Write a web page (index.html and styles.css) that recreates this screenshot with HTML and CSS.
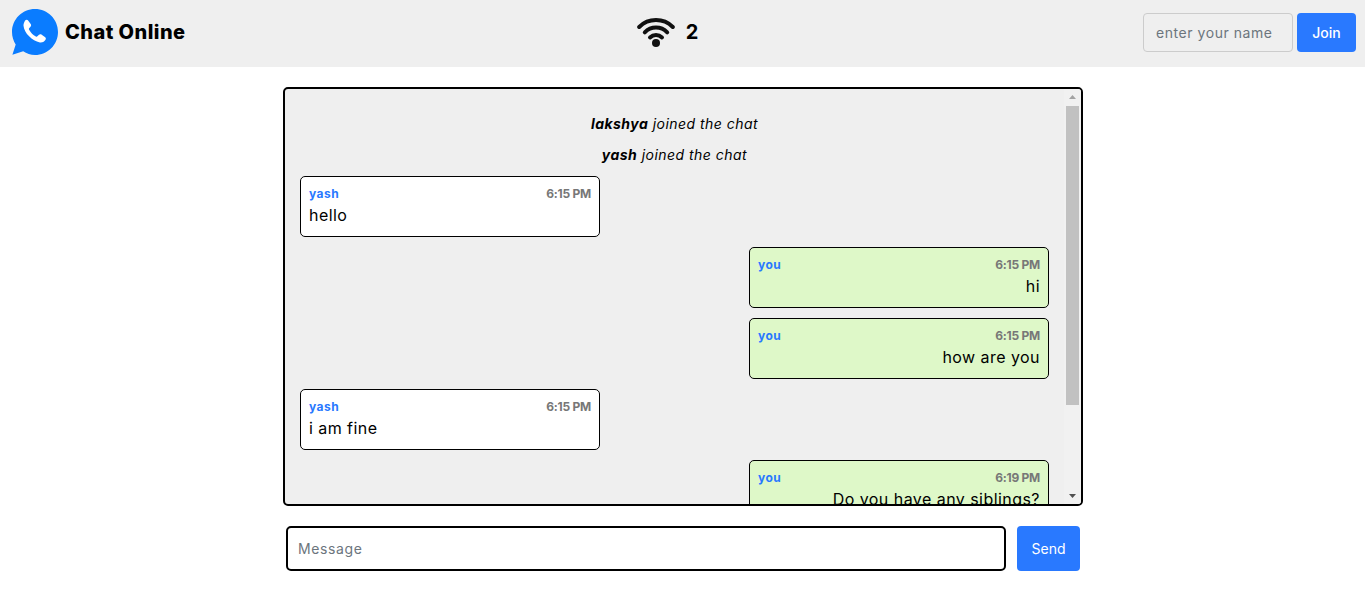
FILE: index.html
```html
<!DOCTYPE html>
<html lang="en">
<head>
<meta charset="utf-8">
<title>Chat Online</title>
<link rel="stylesheet" href="styles.css">
</head>
<body>
<header class="topbar">
  <div class="brand">
    <svg class="logo" viewBox="0 0 46 46" aria-hidden="true">
      <path fill="#0a7cff" d="M23 0C10.300 0 0 10.300 0 23c0 4.600 1.400 8.900 3.700 12.500L.4 45.700l10.800-3.400C14.600 44.700 18.700 46 23 46c12.700 0 23-10.300 23-23S35.700 0 23 0z"/>
      <g transform="translate(1.200 1.300) scale(.92)">
        <path fill="#fff" d="M12.700 11.300c1-1 2.700-1.300 3.500-.3l2.800 4c.7 1 .6 2-.2 2.900l-1.500 1.600c-.4.500-.4 1 0 1.700 1.800 3.200 4.200 5.600 7.300 7.300.7.400 1.200.3 1.700-.2l1.700-1.600c.9-.8 2-.8 3-.1l3.800 2.600c1 .8.900 2.300-.1 3.400-1.500 1.700-3.200 2.800-5.700 2.400-4.300-.7-8.400-3.300-11.700-6.700-3.400-3.400-5.700-7.600-6.100-11.600-.2-2.300 1-3.900 1.500-5z"/>
      </g>
    </svg>
    <h1 class="brand-name">Chat Online</h1>
  </div>
  <div class="status">
    <svg class="wifi" viewBox="0 0 38 30" aria-hidden="true">
      <g fill="none" stroke="#111" stroke-width="4" stroke-linecap="round">
        <path d="M2.200 10C11.500 .8 26.500 .8 35.800 10"/>
        <path d="M7.800 15.300C14 9 24 9 30.200 15.300"/>
        <path d="M13 20.500C16.500 17.200 21.500 17.200 25 20.500"/>
      </g>
      <circle cx="19" cy="26" r="4" fill="#111"/>
    </svg>
    <span class="status-count">2</span>
  </div>
  <form class="join">
    <input class="name-input" type="text" placeholder="enter your name">
    <button class="btn join-btn" type="button">Join</button>
  </form>
</header>
<main class="chat">
  <div class="frame">
    <section class="log">
      <p class="notice"><b>lakshya</b> joined the chat</p>
      <p class="notice"><b>yash</b> joined the chat</p>
      <article class="bubble">
        <div class="meta"><span class="who">yash</span><span class="time">6:15 PM</span></div>
        <div class="text">hello</div>
      </article>
      <article class="bubble mine">
        <div class="meta"><span class="who">you</span><span class="time">6:15 PM</span></div>
        <div class="text">hi</div>
      </article>
      <article class="bubble mine">
        <div class="meta"><span class="who">you</span><span class="time">6:15 PM</span></div>
        <div class="text">how are you</div>
      </article>
      <article class="bubble">
        <div class="meta"><span class="who">yash</span><span class="time">6:15 PM</span></div>
        <div class="text">i am fine</div>
      </article>
      <article class="bubble mine">
        <div class="meta"><span class="who">you</span><span class="time">6:19 PM</span></div>
        <div class="text">Do you have any siblings?</div>
      </article>
    </section>
    <div class="scrollbar" aria-hidden="true">
      <svg class="arrow" viewBox="0 0 17 17"><path fill="#a3a3a3" d="M8.500 6 12 10H5z"/></svg>
      <div class="track"><div class="thumb"></div></div>
      <svg class="arrow" viewBox="0 0 17 17"><path fill="#505050" d="M8.500 11 12 7H5z"/></svg>
    </div>
  </div>
  <form class="composer">
    <input class="message-input" type="text" placeholder="Message">
    <button class="btn send-btn" type="button">Send</button>
  </form>
</main>
</body>
</html>
```
FILE: styles.css
```css
* { box-sizing: border-box; }
html, body { margin: 0; padding: 0; }
body {
  height: 596px;
  overflow: hidden;
  background: #fff;
  color: #000;
  font-family: Inter, "Noto Sans", sans-serif;
}
.topbar {
  height: 67px;
  background: #efefef;
  display: grid;
  grid-template-columns: 1fr auto 1fr;
  align-items: center;
  padding: 0 9px 3px 12px;
}
.brand { display: flex; align-items: center; gap: 7px; }
.logo { width: 46px; height: 46px; display: block; }
.brand-name { margin: 0; font-size: 20px; font-weight: 800; letter-spacing: .45px; }
.status { display: flex; align-items: center; gap: 11px; margin-left: -33px; }
.wifi { width: 38px; height: 30px; display: block; }
.status-count { font-size: 20px; font-weight: 700; }
.join { display: flex; justify-content: flex-end; gap: 4px; }
.name-input {
  width: 150px; height: 39px; padding: 0 12px;
  border: 1px solid #ccc; border-radius: 4px;
  background: #efefef; font: 400 14px Inter, sans-serif; letter-spacing: .55px; color: #212529;
}
.name-input::placeholder, .message-input::placeholder { color: #6c757d; opacity: 1; }
.btn {
  border: 0; border-radius: 4px; background: #2979ff; color: #fff;
  font: 400 14px Inter, sans-serif; padding: 0;
}
.join-btn { width: 59px; height: 39px; font-weight: 500; }
.chat { width: 800px; margin: 20px 0 0 283px; }
.frame {
  height: 419px;
  border: 2px solid #000;
  border-radius: 5px;
  background: #efefef;
  overflow: hidden;
  display: flex;
}
.log {
  flex: 1;
  min-width: 0;
  overflow: hidden;
  padding: 24px 15px 0;
  display: flex;
  flex-direction: column;
}
.scrollbar { flex: none; width: 17px; background: #f1f1f1; display: flex; flex-direction: column; }
.arrow { flex: none; width: 17px; height: 17px; display: block; }
.track { flex: 1; padding: 0 2px; }
.thumb { height: 299px; background: #c1c1c1; }
.notice { flex: none; margin: 0 0 10px; font-size: 14px; line-height: 21px; text-align: center; font-style: italic; letter-spacing: .47px; }
.notice + .bubble { margin-top: 1px; }
.notice b { font-weight: 700; }
.bubble {
  flex: none;
  width: 300px; height: 61px;
  border: 1px solid #000; border-radius: 5px;
  background: #fff;
  padding: 7px 8px;
  margin-bottom: 10px;
}
.bubble.mine { align-self: flex-end; background: #def8c8; }
.bubble:last-child { margin-bottom: 0; }
.meta { display: flex; justify-content: space-between; align-items: center; height: 18px; font-size: 12px; font-weight: 700; }
.who { color: #2979ff; letter-spacing: .45px; }
.time { color: #777; letter-spacing: -.25px; }
.text { font-size: 16px; line-height: 24px; margin-top: 1px; letter-spacing: .45px; }
.mine .text { text-align: right; }
.composer { display: flex; justify-content: space-between; padding: 20px 3px 0; }
.message-input {
  width: 720px; height: 45px; padding: 0 10px;
  border: 2px solid #000; border-radius: 5px;
  background: #fff; font: 400 14px Inter, sans-serif; letter-spacing: .6px;
}
.send-btn { width: 63px; height: 45px; }
```
